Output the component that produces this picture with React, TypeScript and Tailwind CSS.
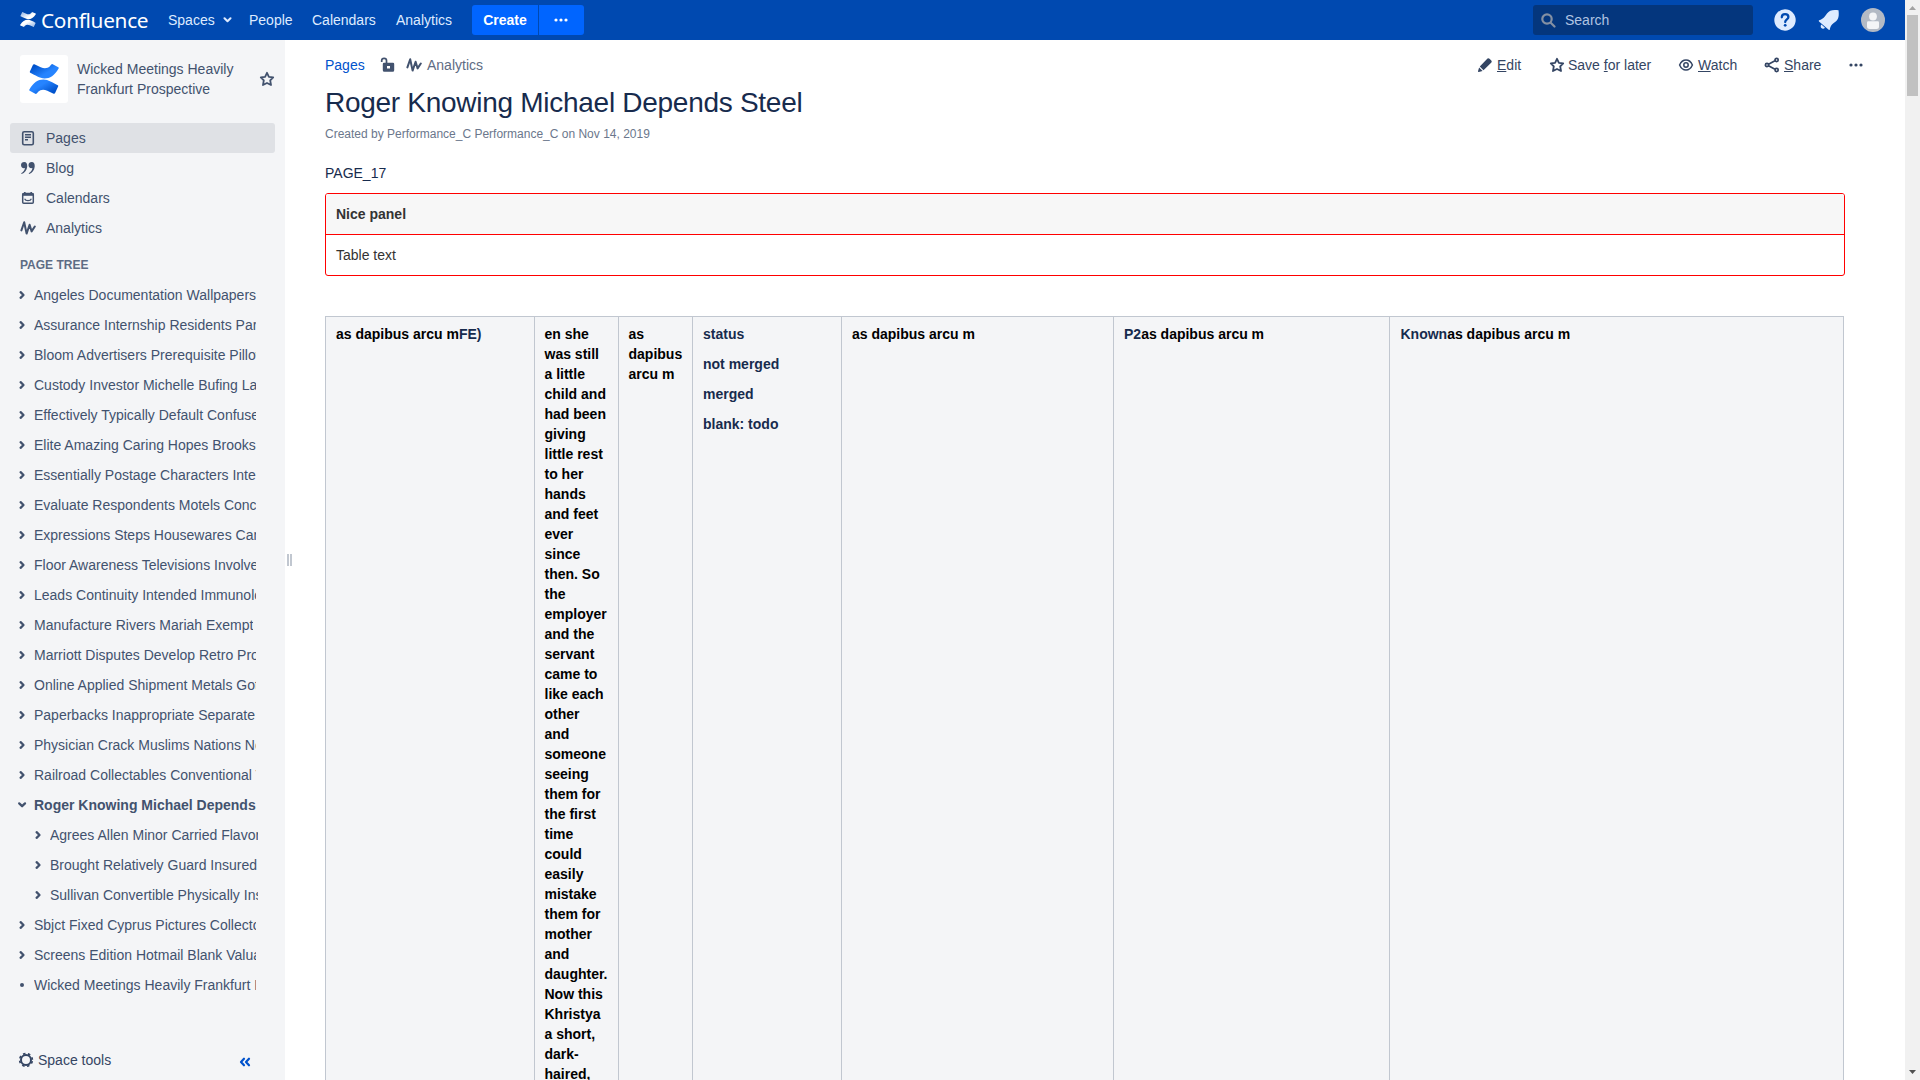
import React from 'react';

type P = { className?: string };

const Analytics = ({ className = '' }: P) => (
  <svg className={className} width="16" height="16" viewBox="0 0 16 16" fill="none" stroke="currentColor" strokeWidth="2" strokeLinecap="round" strokeLinejoin="round">
    <path d="M1.4 10.4L4.200 2.200l2.400 11.400L9.600 4.800l2 6.600L14.800 6.500" />
  </svg>
);

const Star = ({ className = '' }: P) => (
  <svg className={className} width="16" height="16" viewBox="0 0 16 16" fill="none" stroke="currentColor" strokeWidth="1.8" strokeLinejoin="round">
    <path d="M8 1.8l1.9 4 4.3.5-3 3.1.8 4.6L8 12l-4 2 .8-4.6-3-3.1 4.3-.5z" />
  </svg>
);

const Dots = ({ className = '' }: P) => (
  <svg className={className} width="14" height="4" viewBox="0 0 14 4" fill="currentColor">
    <circle cx="2" cy="2" r="1.6" />
    <circle cx="7" cy="2" r="1.6" />
    <circle cx="12" cy="2" r="1.6" />
  </svg>
);

const Chevron = ({ className = '' }: P) => (
  <svg className={className} width="8" height="10" viewBox="0 0 8 10" fill="none" stroke="currentColor" strokeWidth="2.300" strokeLinecap="round" strokeLinejoin="round">
    <path d="M2.600 2.200L5.500 5l-2.900 2.800" />
  </svg>
);

const Bow = ({ className = '', white = false }: P & { white?: boolean }) => {
  const id = white ? 'w' : 'b';
  const from = white ? '#a9c4ea' : '#0052cc';
  const to = white ? '#ffffff' : '#2684ff';
  return (
    <svg className={className} viewBox="0 0 30 34" preserveAspectRatio="none">
      <defs>
        <linearGradient id={id + '1'} x1="0" y1="0.2" x2="0.75" y2="0.8">
          <stop offset="0.1" stopColor={from} />
          <stop offset="0.75" stopColor={to} />
        </linearGradient>
        <linearGradient id={id + '2'} x1="1" y1="0.8" x2="0.25" y2="0.2">
          <stop offset="0.1" stopColor={from} />
          <stop offset="0.75" stopColor={to} />
        </linearGradient>
      </defs>
      <path fill={`url(#${id}1)`} d="M4 .8Q4.500 0 5.400.4L11.700 3.700Q15.500 5.600 18.600 4.300Q20.600 3.300 22.300.5Q22.900-.1 23.700.3L29.300 3.600Q30 4.100 29.600 5C25.500 13 21 16.300 15.600 16.300C10.500 16.300 6.500 12.700 1.200 9.900Q.5 9.400.9 8.600Z" />
      <path fill={`url(#${id}2)`} d="M26 33.200Q25.500 34 24.600 33.600L18.300 30.300Q14.500 28.400 11.400 29.700Q9.400 30.700 7.700 33.500Q7.100 34.100 6.300 33.700L.7 30.400Q0 29.900.4 29C4.500 21 9 17.700 14.400 17.700C19.500 17.700 23.500 21.300 28.800 24.100Q29.500 24.600 29.100 25.400Z" />
    </svg>
  );
};

const treeTop = [
  'Angeles Documentation Wallpapers',
  'Assurance Internship Residents Parent',
  'Bloom Advertisers Prerequisite Pillow',
  'Custody Investor Michelle Bufing Laser',
  'Effectively Typically Default Confused',
  'Elite Amazing Caring Hopes Brooks',
  'Essentially Postage Characters Internet',
  'Evaluate Respondents Motels Concern',
  'Expressions Steps Housewares Camera',
  'Floor Awareness Televisions Involved',
  'Leads Continuity Intended Immunology',
  'Manufacture Rivers Mariah Exempt',
  'Marriott Disputes Develop Retro Product',
  'Online Applied Shipment Metals Gothic',
  'Paperbacks Inappropriate Separate',
  'Physician Crack Muslims Nations Notes',
  'Railroad Collectables Conventional Tips',
];
const treeChildren = [
  'Agrees Allen Minor Carried Flavors',
  'Brought Relatively Guard Insured',
  'Sullivan Convertible Physically Insects',
];
const treeBottom = ['Sbjct Fixed Cyprus Pictures Collector', 'Screens Edition Hotmail Blank Valuable'];

function TreeItem({ text, child = false }: { text: string; child?: boolean }) {
  return (
    <li className={child ? 'flex h-[30px] w-[258px] items-center pl-[34px]' : 'flex h-[30px] w-64 items-center pl-[18px]'}>
      <Chevron className="mr-2 shrink-0" />
      <span className="overflow-hidden whitespace-nowrap">{text}</span>
    </li>
  );
}

function Header() {
  return (
    <header className="flex h-10 shrink-0 items-center bg-[#0049b0] text-[#deebff]">
      <div className="ml-5 flex w-[148px] items-center">
        <Bow white className="mr-[5px] mb-px h-[15px] w-4" />
        <span className="font-['Noto_Sans'] text-[20.800px] leading-10 tracking-[-0.3px] text-white">Confluence</span>
      </div>
      <nav className="flex w-[304px] items-center">
        <span className="w-[55px]">Spaces</span>
        <svg className="mr-[17px]" width="9" height="6" viewBox="0 0 9 6" fill="none" stroke="currentColor" strokeWidth="2" strokeLinecap="round" strokeLinejoin="round"><path d="M1.500 1.200L4.500 4.200l3-3" /></svg>
        <span className="w-[63px]">People</span>
        <span className="w-[84px]">Calendars</span>
        <span>Analytics</span>
      </nav>
      <button className="h-[30px] w-[66px] rounded-l-[3px] bg-[#0065ff] font-bold text-white">Create</button>
      <button className="ml-px flex h-[30px] w-[45px] items-center justify-center rounded-r-[3px] bg-[#0065ff] pr-px text-white"><Dots /></button>
      <div className="ml-auto flex h-[30px] w-[220px] items-center rounded-[3px] bg-[#04367d] pl-2 text-[#b0c4e2]">
        <svg className="mr-[9px]" width="15" height="15" viewBox="0 0 15 15" fill="none" stroke="#8490a3" strokeWidth="2.200" strokeLinecap="round"><circle cx="6" cy="6" r="4.700" /><path d="M9.700 9.700l3.800 3.800" /></svg>
        Search
      </div>
      <svg className="ml-[21px]" width="22" height="22" viewBox="0 0 22 22"><circle cx="11" cy="11" r="10.700" fill="#deebff" /><path d="M7.800 8.300c0-4.200 6.600-4 6.600-.2 0 2.300-3.200 2.400-3.200 5" fill="none" stroke="#0049b0" strokeWidth="2.300" strokeLinecap="round" /><circle cx="11.200" cy="16.300" r="1.400" fill="#0049b0" /></svg>
      <svg className="ml-[22px]" width="22" height="22" viewBox="0 0 22 22" fill="#deebff"><path d="M1.200 11.200C5.500 9.800 7 7.500 9 4.500 11.500 1 15 .5 20.500 1.200c.6 5 .5 9-3.400 11.700-3 2-4.600 3.600-5.300 7.700Q11.500 21.500 10.700 20.800L1 12.400Q.3 11.500 1.200 11.200z" /><path d="M3.400 15.500l3.600 3.200c-1.200 1.300-2.800 1.100-3.700.2-.8-.9-.8-2.400.1-3.400z" /></svg>
      <svg className="mr-5 ml-[21px]" width="24" height="24" viewBox="0 0 24 24"><circle cx="12" cy="12" r="12" fill="#b3bac5" /><circle cx="12" cy="8.500" r="3.900" fill="#f4f5f7" /><path d="M6 14.500q0-1.200 1.200-1.200h9.600q1.200 0 1.200 1.200v4q0 2.500-2.500 2.500h-7Q6 21 6 18.500z" fill="#f4f5f7" /></svg>
    </header>
  );
}

function Sidebar() {
  return (
    <aside className="flex w-[285px] shrink-0 flex-col bg-[#f4f5f7] text-[#42526e]">
      <div className="mt-[15px] flex h-12 items-center pl-5">
        <div className="mr-[9px] flex h-12 w-12 items-center justify-center rounded-[3px] bg-white"><Bow className="h-[30px] w-[30px]" /></div>
        <div className="w-[182px] leading-5">Wicked Meetings Heavily<br />Frankfurt Prospective</div>
        <Star />
      </div>
      <ul className="mt-5">
        <li className="ml-[10px] flex h-[30px] w-[265px] items-center rounded-[3px] bg-[#dfe1e5] pl-[10px]">
          <svg className="mr-[10px]" width="16" height="16" viewBox="0 0 16 16" fill="none" stroke="currentColor"><rect x="2.700" y="1.700" width="10.600" height="13" rx="1.500" strokeWidth="1.600" /><path d="M5 4.700h6M5 7.200h6M5 9.700h3" strokeWidth="1.400" /></svg>
          Pages
        </li>
        <li className="flex h-[30px] items-center pl-5">
          <svg className="mr-[10px]" width="16" height="16" viewBox="0 0 16 16" fill="currentColor"><path d="M4.200 2C6.400 2 7.500 4 7.200 6.800 6.800 10.500 4.800 13 1.600 14L1.200 13.200C3.400 12 4.600 10.500 4.900 8 2.500 8.600 1 7 1 5 1 3.200 2.400 2 4.200 2zM11.700 2c2.200 0 3.300 2 3 4.800-.4 3.700-2.400 6.200-5.600 7.200l-.4-.8c2.200-1.200 3.400-2.700 3.700-5.200C10 8.600 8.500 7 8.500 5c0-1.800 1.400-3 3.200-3z" /></svg>
          Blog
        </li>
        <li className="flex h-[30px] items-center pl-5">
          <svg className="mr-[10px]" width="16" height="16" viewBox="0 0 16 16" fill="none" stroke="currentColor"><rect x="2.700" y="3.500" width="10.600" height="9.800" rx="1" strokeWidth="1.500" /><path d="M2.500 4.500h11" strokeWidth="2.600" /><path d="M4.800 2v2M11.200 2v2" strokeWidth="1.600" /><path d="M4.600 8.800c1 2.500 5.800 2.500 6.800 0" strokeWidth="1.200" /></svg>
          Calendars
        </li>
        <li className="flex h-[30px] items-center pl-5"><Analytics className="mr-[10px]" />Analytics</li>
      </ul>
      <h5 className="mt-3 mb-[5px] pl-5 text-xs leading-5 font-bold text-[#5e6c84]">PAGE TREE</h5>
      <ul>
        {treeTop.map((t) => <TreeItem key={t} text={t} />)}
        <li className="flex h-[30px] w-64 items-center pl-[17px] font-bold">
          <svg className="mr-[7px] shrink-0" width="10" height="8" viewBox="0 0 10 8" fill="none" stroke="currentColor" strokeWidth="2.300" strokeLinecap="round" strokeLinejoin="round"><path d="M2.200 2.400l2.900 2.800 2.900-2.800" /></svg>
          <span className="overflow-hidden whitespace-nowrap">Roger Knowing Michael Depends Steel</span>
        </li>
        {treeChildren.map((t) => <TreeItem key={t} text={t} child />)}
        {treeBottom.map((t) => <TreeItem key={t} text={t} />)}
        <li className="flex h-[30px] w-64 items-center pl-5">
          <span className="mr-[10px] h-1 w-1 shrink-0 rounded-full bg-[#42526e]" />
          <span className="overflow-hidden whitespace-nowrap">Wicked Meetings Heavily Frankfurt Prospective</span>
        </li>
      </ul>
      <div className="mt-auto flex h-10 items-center pl-[18px] text-[#344563]">
        <svg className="mr-1" width="16" height="16" viewBox="0 0 16 16" fill="none" stroke="currentColor"><circle cx="8" cy="8" r="5" strokeWidth="2" /><circle cx="8" cy="8" r="6.400" strokeWidth="1.600" strokeDasharray="2.500 2.526" strokeDashoffset="-1.200" /></svg>
        <span className="w-[201px]">Space tools</span>
        <svg className="mt-1" width="12" height="10" viewBox="0 0 12 10" fill="none" stroke="#0052cc" strokeWidth="2.200" strokeLinecap="round" strokeLinejoin="round"><path d="M5 1.700L2 5l3 3.300M10 1.700L7 5l3 3.300" /></svg>
      </div>
    </aside>
  );
}

function Toolbar() {
  return (
    <div className="flex h-[30px] items-center text-[#42526e]">
      <span className="w-[55px] text-[#0052cc]">Pages</span>
      <svg className="mr-[10px]" width="16" height="16" viewBox="0 0 16 16" fill="none"><path d="M1.700 5V3.600c0-3 4.800-3 4.800 0V6" stroke="currentColor" strokeWidth="1.700" /><path fillRule="evenodd" d="M4 5.800h9q1.200 0 1.200 1.200v6.300q0 1.500-1.500 1.500H4.300q-1.500 0-1.500-1.500V7Q2.800 5.800 4 5.800zM7 9h3v2.600H7z" fill="currentColor" /></svg>
      <Analytics className="mr-[5px]" />
      <span className="text-[#5e6c84]">Analytics</span>
      <div className="ml-auto flex items-center text-[#344563]">
        <svg className="mr-1" width="16" height="16" viewBox="0 0 16 16" fill="currentColor"><path d="M10.500 1.600q1-.8 2 .1l1.800 1.800q.9 1 .1 2L6.500 13.200 2.800 9.400zM2.100 10.500l3.500 3.400-3.800 1.200q-.9.100-.8-.8z" /></svg>
        <span className="w-[52px]"><u>E</u>dit</span>
        <Star className="mr-[3px]" />
        <span className="w-[110px]">Save <u>f</u>or later</span>
        <svg className="mr-[4px]" width="16" height="16" viewBox="0 0 16 16" fill="none" stroke="currentColor" strokeWidth="1.500"><path d="M1.600 8C4.500 1.300 11.500 1.300 14.400 8 11.500 14.700 4.500 14.700 1.600 8z" /><circle cx="8" cy="8" r="2.200" /></svg>
        <span className="w-[66px]"><u>W</u>atch</span>
        <svg className="mr-[4px]" width="16" height="16" viewBox="0 0 16 16" fill="none" stroke="currentColor" strokeWidth="1.700"><path d="M4.500 7.200L11 3.800M4.500 8.800l6.500 3.400" /><circle cx="3" cy="8" r="1.600" /><circle cx="12.600" cy="3" r="1.600" /><circle cx="12.600" cy="13" r="1.600" /></svg>
        <span className="w-[65px]"><u>S</u>hare</span>
        <Dots />
      </div>
    </div>
  );
}

const cell = 'border-l border-[#c1c7d0] pt-[7px] pl-[10px] pr-[10px]';
const narrowCell = 'border-l border-[#c1c7d0] pt-[7px] pl-[9.500px] pr-[10.500px]';

function Content() {
  return (
    <main className="min-w-0 flex-1 bg-white pt-[10px] pl-10 text-[#172b4d]">
      <div className="pr-[42px]"><Toolbar /></div>
      <h1 className="mt-[7px] text-[28px] leading-8 tracking-[-0.28px]">Roger Knowing Michael Depends Steel</h1>
      <p className="mt-[5px] text-xs leading-5 text-[#6b778c]">Created by Performance_C Performance_C on Nov 14, 2019</p>
      <p className="mt-[19px] leading-5">PAGE_17</p>
      <section className="mt-[10px] w-[1520px] overflow-hidden rounded-[3px] border border-[#f00] text-[#333]">
        <div className="h-[41px] border-b border-[#f00] bg-[#f7f7f7] pl-[10px] leading-10 font-bold">Nice panel</div>
        <div className="h-10 pl-[10px] leading-10">Table text</div>
      </section>
      <div className="mt-10 grid h-[900px] w-[1519px] grid-cols-[209px_84px_74px_149px_272px_276px_455px] border-t border-r border-[#c1c7d0] bg-[#f4f5f7] leading-5 font-bold text-black">
        <div className={cell}>as dapibus arcu m<span className="text-[#172b4d]">FE)</span></div>
        <div className={narrowCell}>
          en she was still a little child and had been giving little rest to her hands and feet ever since then. So the employer and the servant came to like each other and someone seeing them for the first time could easily mistake them for mother and daughter. Now this Khristya a short, dark-haired,
        </div>
        <div className="border-l border-[#c1c7d0] pt-[7px] pl-[9.500px]">as dapibus arcu m</div>
        <div className={`${cell} flex flex-col gap-[10px] text-[#172b4d]`}>
          <p>status</p><p>not merged</p><p>merged</p><p>blank: todo</p>
        </div>
        <div className={cell}>as dapibus arcu m</div>
        <div className={cell}><span className="text-[#172b4d]">P2</span>as dapibus arcu m</div>
        <div className="border-l border-[#c1c7d0] pt-[7px] pl-[10.500px]"><span className="text-[#172b4d]">Known</span>as dapibus arcu m</div>
      </div>
    </main>
  );
}

export default function App() {
  return (
    <div className="flex h-[1080px] w-[1920px] overflow-hidden bg-white font-['Liberation_Sans',sans-serif] text-sm">
      <div className="flex w-[1905px] flex-col">
        <Header />
        <div className="relative flex min-h-0 flex-1">
          <Sidebar />
          <Content />
          <div className="absolute top-[514px] left-[287px] h-3 w-[5px] border-x-2 border-[#c1c7d0]" />
        </div>
      </div>
      <div className="flex w-[15px] flex-col items-center bg-[#f1f1f1]">
        <svg width="15" height="15" viewBox="0 0 15 15" fill="#a3a3a3"><path d="M4 10h7L7.500 6z" /></svg>
        <div className="h-[81px] w-[11px] bg-[#c1c1c1]" />
        <svg className="mt-auto" width="15" height="15" viewBox="0 0 15 15" fill="#505050"><path d="M4 5h7L7.500 9z" /></svg>
      </div>
    </div>
  );
}
